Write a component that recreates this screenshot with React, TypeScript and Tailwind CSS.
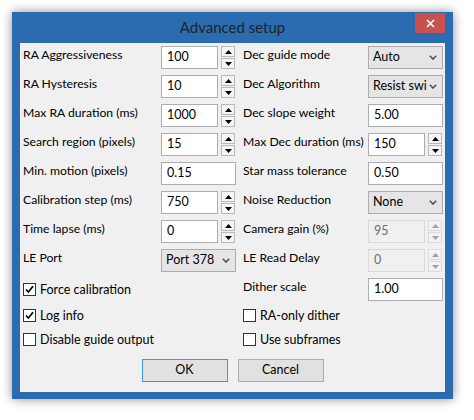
import React from "react";

const font = { fontFamily: 'Lato, "Noto Sans", sans-serif' };

function Arrow({ up, disabled }: { up?: boolean; disabled?: boolean }) {
  return (
    <svg width="7" height="4" viewBox="0 0 7 4" className="block">
      <polygon
        points={up ? "0,4 7,4 3.5,0" : "0,0 7,0 3.5,4"}
        fill={disabled ? "#a0a0a0" : "#000"}
      />
    </svg>
  );
}

function Spin({ disabled }: { disabled?: boolean }) {
  const btn = disabled
    ? "flex h-[11px] w-[14px] items-center justify-center border border-[#dcdcdc] bg-[#f3f3f3]"
    : "flex h-[11px] w-[14px] items-center justify-center border border-[#b8b8b8] bg-[#f5f5f5]";
  return (
    <div className="ml-[3px] flex flex-col gap-[1px]">
      <div className={btn}>
        <Arrow up disabled={disabled} />
      </div>
      <div className={btn}>
        <Arrow disabled={disabled} />
      </div>
    </div>
  );
}

function TextBox({ value, w, disabled }: { value: string; w: string; disabled?: boolean }) {
  return (
    <div
      className={`flex h-[23px] items-center pl-[5px] text-[12.5px] ${w} ${
        disabled
          ? "border border-[#d9d9d9] bg-[#f0f0f0] text-[#6d6d6d]"
          : "border border-[#abadb3] bg-white text-black"
      }`}
    >
      {value}
    </div>
  );
}

function Combo({ value, w }: { value: string; w: string }) {
  return (
    <div
      className={`flex h-[23px] items-center justify-between overflow-hidden border border-[#acacac] bg-[#e5e5e5] pl-[4px] pr-[5px] text-[12.5px] ${w}`}
    >
      <span className="whitespace-nowrap">{value}</span>
      <svg width="8" height="5" viewBox="0 0 8 5" className="ml-[2px] shrink-0">
        <polyline points="0.8,0.8 4,4 7.2,0.8" fill="none" stroke="#505050" strokeWidth="1.6" />
      </svg>
    </div>
  );
}

function Row({ label, labelW, children }: { label: string; labelW: string; children: React.ReactNode }) {
  return (
    <div className="flex h-[29px] items-start">
      <div className={`${labelW} whitespace-nowrap pt-[1px] text-[12.2px] leading-[16px]`}>{label}</div>
      {children}
    </div>
  );
}

function Check({ label, checked, mt }: { label: string; checked?: boolean; mt: string }) {
  return (
    <div className={`flex h-[13px] items-center ${mt}`}>
      <div className="flex h-[13px] w-[13px] items-center justify-center border border-[#333] bg-white">
        {checked && (
          <svg width="9" height="9" viewBox="0 0 9 9">
            <polyline points="1,4.5 3.4,7 8,1.2" fill="none" stroke="#000" strokeWidth="1.8" />
          </svg>
        )}
      </div>
      <span className="ml-[4px] whitespace-nowrap text-[12.5px] leading-[16px]">{label}</span>
    </div>
  );
}

export default function App() {
  const lw = "w-[138px]";
  const rw = "w-[125px]";
  return (
    <div className="h-[420px] w-[474px] bg-white pl-[12px] pt-[12px]" style={font}>
      <div className="flex w-[441px] flex-col bg-[#2b6cb0] px-[8px] pb-[7px] shadow-[0_0_10px_rgba(0,0,0,0.45)]">
        <div className="relative flex h-[31px] items-center justify-center">
          <span className="text-[15px] text-[#222]">Advanced setup</span>
          <div className="absolute right-0 top-[1px] flex h-[20px] w-[30px] items-center justify-center bg-[#c75050]">
            <svg width="9" height="9" viewBox="0 0 9 9">
              <path d="M1 1 L8 8 M8 1 L1 8" stroke="#fff" strokeWidth="1.6" />
            </svg>
          </div>
        </div>
        <div className="flex h-[349px] flex-col bg-[#f0f0f0] pt-[3px] text-black">
          <div className="flex">
            <div className="flex w-[223px] flex-col pl-[3px]">
              <Row label="RA Aggressiveness" labelW={lw}>
                <TextBox value="100" w="w-[57px]" />
                <Spin />
              </Row>
              <Row label="RA Hysteresis" labelW={lw}>
                <TextBox value="10" w="w-[57px]" />
                <Spin />
              </Row>
              <Row label="Max RA duration (ms)" labelW={lw}>
                <TextBox value="1000" w="w-[57px]" />
                <Spin />
              </Row>
              <Row label="Search region (pixels)" labelW={lw}>
                <TextBox value="15" w="w-[57px]" />
                <Spin />
              </Row>
              <Row label="Min. motion (pixels)" labelW={lw}>
                <TextBox value="0.15" w="w-[75px]" />
              </Row>
              <Row label="Calibration step (ms)" labelW={lw}>
                <TextBox value="750" w="w-[57px]" />
                <Spin />
              </Row>
              <Row label="Time lapse (ms)" labelW={lw}>
                <TextBox value="0" w="w-[57px]" />
                <Spin />
              </Row>
              <Row label="LE Port" labelW={lw}>
                <Combo value="Port 378" w="w-[75px]" />
              </Row>
              <Check label="Force calibration" checked mt="mt-[5px]" />
              <Check label="Log info" checked mt="mt-[13px]" />
              <Check label="Disable guide output" mt="mt-[11px]" />
            </div>
            <div className="flex flex-col">
              <Row label="Dec guide mode" labelW={rw}>
                <Combo value="Auto" w="w-[75px]" />
              </Row>
              <Row label="Dec Algorithm" labelW={rw}>
                <Combo value="Resist swi" w="w-[75px]" />
              </Row>
              <Row label="Dec slope weight" labelW={rw}>
                <TextBox value="5.00" w="w-[75px]" />
              </Row>
              <Row label="Max Dec duration (ms)" labelW={rw}>
                <TextBox value="150" w="w-[57px]" />
                <Spin />
              </Row>
              <Row label="Star mass tolerance" labelW={rw}>
                <TextBox value="0.50" w="w-[75px]" />
              </Row>
              <Row label="Noise Reduction" labelW={rw}>
                <Combo value="None" w="w-[75px]" />
              </Row>
              <Row label="Camera gain (%)" labelW={rw}>
                <TextBox value="95" w="w-[57px]" disabled />
                <Spin disabled />
              </Row>
              <Row label="LE Read Delay" labelW={rw}>
                <TextBox value="0" w="w-[57px]" disabled />
                <Spin disabled />
              </Row>
              <Row label="Dither scale" labelW={rw}>
                <TextBox value="1.00" w="w-[75px]" />
              </Row>
              <Check label="RA-only dither" mt="mt-[2px]" />
              <Check label="Use subframes" mt="mt-[11px]" />
            </div>
          </div>
          <div className="mt-[13px] flex justify-center gap-[10px]">
            <div className="flex h-[23px] w-[86px] items-center justify-center border border-[#3c96e6] bg-[#e1e1e1] text-[12.5px]">
              OK
            </div>
            <div className="flex h-[23px] w-[86px] items-center justify-center border border-[#adadad] bg-[#e1e1e1] text-[12.5px]">
              Cancel
            </div>
          </div>
        </div>
      </div>
    </div>
  );
}
